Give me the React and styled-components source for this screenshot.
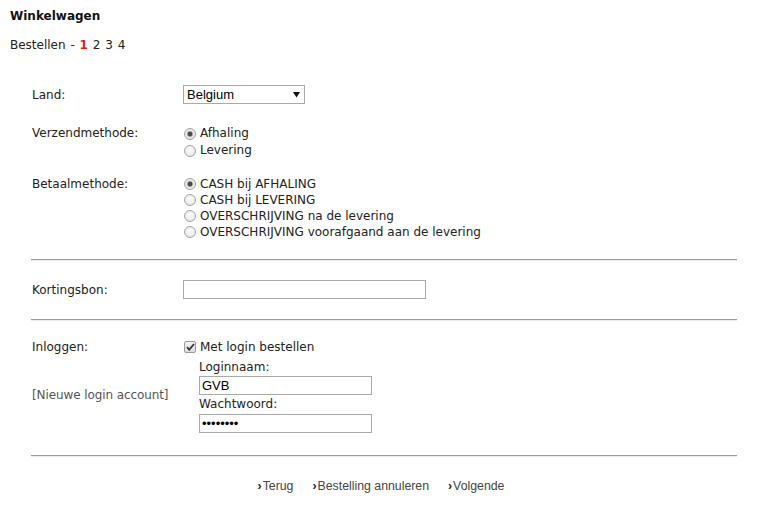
import styled, { createGlobalStyle } from "styled-components";

const Global = createGlobalStyle`
  html, body {
    margin: 0;
    padding: 0;
    background: #fff;
  }
  body {
    font-family: "DejaVu Sans", Verdana, sans-serif;
    font-size: 12px;
    color: #222;
  }
`;

const Page = styled.div`
  width: 757px;
  padding-top: 8px;
`;

const Title = styled.h1`
  margin: 0 0 0 10px;
  font-size: 12px;
  line-height: 16px;
  font-weight: bold;
  color: #111;
`;

const Steps = styled.div`
  margin: 13px 0 0 10px;
  line-height: 16px;
  word-spacing: 1px;

  b {
    color: #e21b1b;
  }
`;

const Form = styled.div`
  margin-left: 31px;
  width: 706px;
`;

const Row = styled.div`
  display: grid;
  grid-template-columns: 151px 1fr;
  align-items: ${(p) => (p.$center ? "center" : "start")};
  padding-left: 1px;
  margin-top: ${(p) => p.$top || 0}px;
`;

const Label = styled.div`
  line-height: ${(p) => p.$lh || 16}px;
`;

const LabelStack = styled.div`
  display: flex;
  flex-direction: column;
  line-height: 16px;
`;

const Muted = styled.span`
  margin-top: 32px;
  color: #555;
  letter-spacing: -0.1px;
`;

const Options = styled.div`
  display: flex;
  flex-direction: column;
  line-height: ${(p) => p.$lh || 16}px;
`;

const Option = styled.label`
  display: flex;
  align-items: center;
  gap: 4px;
  padding-left: 1px;
`;

const Radio = styled.input.attrs({ type: "radio" })`
  appearance: none;
  margin: 0;
  width: 12px;
  height: 12px;
  border: 1px solid #a3a3a3;
  border-radius: 50%;
  box-sizing: border-box;
  background: radial-gradient(circle at 50% 40%, #fafafa 0%, #e4e4e4 100%);

  &:checked {
    background: radial-gradient(circle, #4a4a4a 0 2px, #9a9a9a 2.5px, #ececec 3.5px, #dedede 100%);
  }
`;

const CheckBox = styled.span`
  display: inline-flex;
  align-items: center;
  justify-content: center;
  width: 12px;
  height: 12px;
  box-sizing: border-box;
  border: 1px solid #9c9c9c;
  border-radius: 2px;
  background: linear-gradient(#f4f4f4, #dcdcdc);
`;

const SelectWrap = styled.div`
  position: relative;
  width: 122px;
  height: 19px;
`;

const Select = styled.select`
  appearance: none;
  width: 100%;
  height: 100%;
  margin: 0;
  padding: 0 0 0 3px;
  border: 1px solid #a9a9a9;
  border-radius: 0;
  background: #fff;
  font-family: "Liberation Sans", Arial, sans-serif;
  font-size: 13px;
  color: #000;
`;

const Arrow = styled.svg`
  position: absolute;
  right: 5px;
  top: 6px;
  pointer-events: none;
`;

const TextInput = styled.input`
  box-sizing: border-box;
  display: block;
  width: ${(p) => p.$w}px;
  height: 19px;
  margin: ${(p) => p.$m || "0"};
  padding: 0 2px;
  border: 1px solid #a9a9a9;
  font-family: "Liberation Sans", Arial, sans-serif;
  font-size: 13px;
  color: #000;
  outline: none;
`;

const Rule = styled.hr`
  margin: ${(p) => p.$top}px 0 0;
  border: 0;
  border-top: 1px solid #9c9c9c;
  border-bottom: 1px solid #ececec;
`;

const Login = styled.div`
  display: flex;
  flex-direction: column;
  line-height: 16px;
`;

const Fields = styled.div`
  display: flex;
  flex-direction: column;
  padding-left: 16px;
  margin-top: 4px;
`;

const FieldLabel = styled.span`
  margin-top: ${(p) => p.$top || 0}px;
`;

const Actions = styled.nav`
  display: flex;
  justify-content: center;
  gap: 19px;
  margin-top: 21px;
  padding-right: 6px;
  line-height: 16px;
  font-family: "Liberation Sans", Arial, sans-serif;
  font-size: 12.3px;
`;

const Action = styled.a`
  color: #444;
  text-decoration: none;
  cursor: pointer;

  &::before {
    content: "›";
    font-weight: bold;
    color: #222;
    margin-right: 1px;
  }
`;

export default function App() {
  return (
    <Page>
      <Global />
      <Title>Winkelwagen</Title>
      <Steps>
        Bestellen - <b>1</b> 2 3 4
      </Steps>

      <Form>
        <Row $top={32} $center>
          <Label>Land:</Label>
          <SelectWrap>
            <Select defaultValue="be">
              <option value="be">Belgium</option>
              <option value="nl">Nederland</option>
            </Select>
            <Arrow width="7" height="7" viewBox="0 0 7 7">
              <path d="M0 1h7L3.5 6.5z" fill="#111" />
            </Arrow>
          </SelectWrap>
        </Row>

        <Row $top={21}>
          <Label $lh={17}>Verzendmethode:</Label>
          <Options $lh={17}>
            <Option>
              <Radio name="verzend" defaultChecked />
              Afhaling
            </Option>
            <Option>
              <Radio name="verzend" />
              Levering
            </Option>
          </Options>
        </Row>

        <Row $top={17}>
          <Label>Betaalmethode:</Label>
          <Options>
            <Option>
              <Radio name="betaal" defaultChecked />
              CASH bij AFHALING
            </Option>
            <Option>
              <Radio name="betaal" />
              CASH bij LEVERING
            </Option>
            <Option>
              <Radio name="betaal" />
              OVERSCHRIJVING na de levering
            </Option>
            <Option>
              <Radio name="betaal" />
              OVERSCHRIJVING voorafgaand aan de levering
            </Option>
          </Options>
        </Row>

        <Rule $top={19} />

        <Row $top={19} $center>
          <Label>Kortingsbon:</Label>
          <TextInput $w={243} />
        </Row>

        <Rule $top={20} />

        <Row $top={18}>
          <LabelStack>
            <span>Inloggen:</span>
            <Muted>[Nieuwe login account]</Muted>
          </LabelStack>
          <Login>
            <Option>
              <CheckBox>
                <svg width="9" height="8" viewBox="0 0 9 8">
                  <path d="M1 4.2l2.3 2.4L8 1" fill="none" stroke="#333" strokeWidth="1.8" />
                </svg>
              </CheckBox>
              Met login bestellen
            </Option>
            <Fields>
              <FieldLabel>Loginnaam:</FieldLabel>
              <TextInput $w={173} $m="1px 0 0" defaultValue="GVB" />
              <FieldLabel $top={1}>Wachtwoord:</FieldLabel>
              <TextInput $w={173} $m="2px 0 0" type="password" defaultValue="12345678" />
            </Fields>
          </Login>
        </Row>

        <Rule $top={22} />

        <Actions>
          <Action>Terug</Action>
          <Action>Bestelling annuleren</Action>
          <Action>Volgende</Action>
        </Actions>
      </Form>
    </Page>
  );
}
